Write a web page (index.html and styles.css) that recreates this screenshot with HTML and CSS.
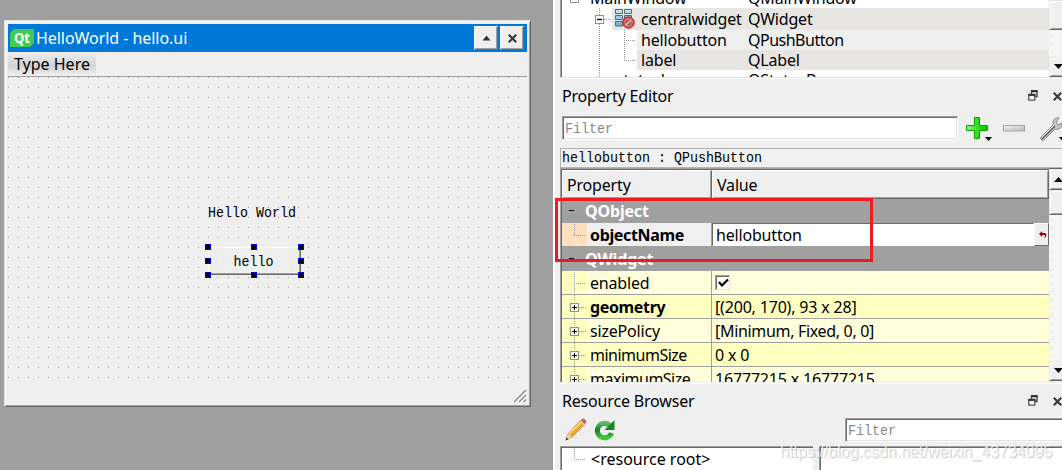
FILE: index.html
```
<!DOCTYPE html>
<html lang="en">
<head>
<meta charset="utf-8">
<title>Qt Designer</title>
<link rel="stylesheet" href="styles.css">
</head>
<body>
<svg width="0" height="0" class="defs">
  <defs>
    <symbol id="float" viewBox="0 0 10 11"><path d="M3.500 1v5.500H9V1z" fill="#efefef" stroke="#3c3c3c" stroke-width="1.300"/><path d="M3 1.200h6.500" stroke="#333" stroke-width="2.200"/><path d="M.8 4.500h6v5.700h-6z" fill="#f4f4f4" stroke="#555" stroke-width="1.300"/><path d="M.3 5h7" stroke="#333" stroke-width="1.800"/></symbol>
    <symbol id="cross" viewBox="0 0 9 9"><path d="M.8 .8l7.400 7.400M8.200 .8L.8 8.200" stroke="#3a3a3a" stroke-width="2.200"/></symbol>
    <linearGradient id="green" x2="1"><stop stop-color="#a0f08a"/><stop offset=".5" stop-color="#35df20"/><stop offset="1" stop-color="#06c800"/></linearGradient>
    <linearGradient id="metal" x2="1" y2="1"><stop stop-color="#f3f3f3"/><stop offset="1" stop-color="#b8b8b8"/></linearGradient>
    <linearGradient id="leaf" y2="1" x2="0"><stop stop-color="#5fbd62"/><stop offset=".45" stop-color="#168022"/><stop offset="1" stop-color="#3ccb37"/></linearGradient>
    <linearGradient id="cell" y2="1" x2="0"><stop stop-color="#c4e6f6"/><stop offset="1" stop-color="#6db0d8"/></linearGradient>
  </defs>
</svg>
<main class="designer">
  <section class="canvas">
    <div class="window">
      <header class="titlebar">
        <svg class="qt" width="24" height="18" viewBox="0 0 24 18"><path d="M4 0h20v14l-4 4H0V4z" fill="#41cd52"/><text x="4" y="14" class="qt-text" textLength="16" lengthAdjust="spacingAndGlyphs">Qt</text></svg>
        <span class="ui title-text">HelloWorld - hello.ui</span>
        <span class="tbtn"><svg width="9" height="6" viewBox="0 0 9 6"><path d="M4.500 .5L8.500 5.500h-8z" fill="#333"/></svg></span>
        <span class="tbtn"><svg width="9" height="9"><use href="#cross"/></svg></span>
      </header>
      <div class="menubar"><span class="menu ui">Type Here</span></div>
      <div class="form">
        <span class="hello-label mono"><span>Hello World</span></span>
        <div class="push mono"><span>hello</span>
          <i class="h l t"></i><i class="h c t"></i><i class="h r t"></i><i class="h l m"></i><i class="h r m"></i><i class="h l b"></i><i class="h c b"></i><i class="h r b"></i>
        </div>
      </div>
      <div class="status"><svg width="13" height="13" viewBox="0 0 13 13"><path d="M0 12L12 0M5 12l7-7M9.500 12l2.500-2.500" stroke="#909090" stroke-width="1.500"/><path d="M2 12.500L12.500 2M6.600 12.500l6-6" stroke="#fff" stroke-width=".8"/></svg></div>
    </div>
  </section>
  <section class="docks">
    <div class="tree">
      <div class="tree-rows ui">
        <div class="trow first"><span class="gut"><i class="exp"></i></span><span class="mw">MainWindow</span><span class="qc">QMainWindow</span></div>
        <div class="trow central"><svg class="branch" width="50" height="22"><path d="M37.500 0v22M42 11.500h8" class="dots"/><rect x="33.500" y="7.500" width="8" height="8" fill="#fff" stroke="#919191"/><path d="M35 11.500h5" stroke="#000" stroke-width="1.400"/></svg>
          <span class="fill alt"><svg class="layout" width="20" height="20" viewBox="0 0 20 20"><g fill="url(#cell)" stroke="#5a6a76"><path d="M.5 .5h7v4h-7zM9.500 .5h7v4h-7zM.5 6.500h7v4h-7zM9.500 6.500h7v4h-7zM.5 12.500h7v4.500h-7z"/></g><circle cx="13.500" cy="13.500" r="5.800" fill="#d9534c" stroke="#a82f2a"/><circle cx="13.500" cy="13.500" r="3.300" fill="#c8413b" stroke="#9a8886" stroke-width="1.500"/><path d="M11 16l5-5" stroke="#ddd" stroke-width="1.300"/></svg><span class="tn">centralwidget</span><span class="tc">QWidget</span></span></div>
        <div class="trow child"><svg class="branch" width="75" height="20"><path d="M37.500 0v20M62.500 0v20M64 10.500h10" class="dots"/></svg><span class="fill"><span class="tn">hellobutton</span><span class="tc tight">QPushButton</span></span></div>
        <div class="trow child"><svg class="branch" width="75" height="20"><path d="M37.500 0v20M62.500 0v10M62 10.500h12" class="dots"/></svg><span class="fill alt"><span class="tn">label</span><span class="tc">QLabel</span></span></div>
        <div class="trow child"><svg class="branch" width="50" height="20"><path d="M37.500 0v20" class="dots"/></svg><span class="fill last"><span class="tn">statusbar</span><span class="tc">QStatusBar</span></span></div>
      </div>
      <div class="scroll s1"><i class="thumb t1"></i><i class="grow"></i><i class="sbtn"><svg width="9" height="5"><path d="M0 0h9L4.500 5z"/></svg></i></div>
    </div>
    <div class="dock-title ui"><span>Property Editor</span><svg class="fl" width="10" height="11"><use href="#float"/></svg><svg width="9" height="9"><use href="#cross"/></svg></div>
    <div class="filter-row">
      <div class="input mono"><span>Filter</span></div>
      <svg class="plus" width="28" height="26" viewBox="0 0 28 26"><path d="M9.500 1.500h5v8h8v5h-8v8h-5v-8h-8v-5h8z" fill="url(#green)" stroke="#0a9d08"/><path d="M20 21h7l-3.500 4z"/></svg>
      <svg class="less" width="22" height="7"><rect x=".5" y=".5" width="21" height="5.500" fill="url(#metal)" stroke="#a5a5a5"/></svg>
      <svg class="wrench" width="24" height="26" viewBox="0 0 24 26"><path d="M2 21L14 9c-1-4 2-8 6-7l-3 4 2 3 4-2c0 5-3 7-7 6L5 24c-3 1-4-1-3-3z" fill="#c8c8c8" stroke="#777" stroke-width=".8"/><path d="M3 23L16 10" stroke="#555" stroke-width="1.500"/><path d="M3 21L15 9" stroke="#fff"/><path d="M20 21h7l-3.500 4z"/></svg>
    </div>
    <div class="object mono"><span>hellobutton : QPushButton</span></div>
    <div class="props">
      <div class="grid ui">
        <div class="head"><span class="hc h1">Property</span><span class="hc h2">Value</span></div>
        <div class="group g1"><i class="gm"></i><b>QObject</b></div>
        <div class="prow edit"><span class="ind"><svg width="26" height="23"><path d="M12.500 1v11M12 12.500h12" class="dots"/></svg></span><span class="name"><b>objectName</b></span><span class="editor">hellobutton</span><span class="reset"><svg width="8" height="8" viewBox="0 0 8 8"><path d="M0 3l3-3v2h2.500C8 2 8 6 5.500 7V6C6.500 5 6 4 5 4H3v2z" fill="#980000"/></svg></span></div>
        <div class="group g2"><i class="gm"></i><b>QWidget</b></div>
        <div class="prow light"><span class="ind"><svg width="26" height="23"><path d="M12.500 1v22M14 12.500h10" class="dots"/></svg></span><span class="name">enabled</span><span class="val"><i class="check"><svg width="11" height="10"><path d="M1 4l3 3.500L10 1.500" fill="none" stroke="#000" stroke-width="2.200"/></svg></i></span></div>
        <div class="prow"><span class="ind"><svg width="26" height="23"><path d="M12.500 0v23M17 12.500h8" class="dots"/><rect x="8.500" y="8.500" width="8" height="8" fill="#ffffe5" stroke="#919191"/><path d="M10 12.500h5M12.500 10v5" stroke="#000"/></svg></span><span class="name tight"><b>geometry</b></span><span class="val">[(200, 170), 93 x 28]</span></div>
        <div class="prow light"><span class="ind"><svg width="26" height="23"><path d="M12.500 0v23M17 12.500h8" class="dots"/><rect x="8.500" y="8.500" width="8" height="8" fill="#ffffe5" stroke="#919191"/><path d="M10 12.500h5M12.500 10v5" stroke="#000"/></svg></span><span class="name">sizePolicy</span><span class="val snug">[Minimum, Fixed, 0, 0]</span></div>
        <div class="prow"><span class="ind"><svg width="26" height="23"><path d="M12.500 0v23M17 12.500h8" class="dots"/><rect x="8.500" y="8.500" width="8" height="8" fill="#ffffe5" stroke="#919191"/><path d="M10 12.500h5M12.500 10v5" stroke="#000"/></svg></span><span class="name tight">minimumSize</span><span class="val">0 x 0</span></div>
        <div class="prow light"><span class="ind"><svg width="26" height="23"><path d="M12.500 0v23M17 12.500h8" class="dots"/><rect x="8.500" y="8.500" width="8" height="8" fill="#ffffe5" stroke="#919191"/><path d="M10 12.500h5M12.500 10v5" stroke="#000"/></svg></span><span class="name tight">maximumSize</span><span class="val">16777215 x 16777215</span></div>
      </div>
      <div class="scroll s2"><i class="sbtn up"><svg width="9" height="5"><path d="M0 5h9L4.500 0z"/></svg></i><i class="thumb t2"></i><i class="grow"></i><i class="sbtn"><svg width="9" height="5"><path d="M0 0h9L4.500 5z"/></svg></i></div>
    </div>
    <div class="dock-title second ui"><span>Resource Browser</span><svg class="fl" width="10" height="11"><use href="#float"/></svg><svg width="9" height="9"><use href="#cross"/></svg></div>
    <div class="tools">
      <svg width="24" height="24" viewBox="0 0 24 24"><path d="M2 22l2-6L17 2l4 4L8 19z" fill="#efaa32" stroke="#b66f16" stroke-width=".7"/><path d="M5 16L18 3" stroke="#ffd779" stroke-width="1.600"/><path d="M2 22l2-6 4 3z" fill="#eed9b3"/><path d="M1.500 22.500l1-3 2 1.500z" fill="#333"/><path d="M17 2l2-1.500q3 .5 3.500 3.500L21 6z" fill="#c9654a"/><path d="M16 3l4 4" stroke="#ccc" stroke-width="1.500"/></svg>
      <svg class="reload" width="22" height="22" viewBox="0 0 22 22"><path d="M16 6.500A7.300 7.300 0 1 0 17.500 14" fill="none" stroke="url(#leaf)" stroke-width="5"/><path d="M20.500 1v10H10.500z" fill="#188524"/></svg>
      <div class="input mono"><span>Filter</span></div>
    </div>
    <div class="resources">
      <div class="rbox ui"><svg width="25" height="24"><path d="M12.500 0v10M12 10.500h12" class="dots"/></svg><span class="rr">&lt;resource root&gt;</span></div>
      <div class="rbox right"></div>
    </div>
  </section>
  <div class="highlight"></div>
  <div class="watermark">https://blog.csdn.net/weixin_43734095</div>
</main>
</body>
</html>
```
FILE: styles.css
```
* { box-sizing: border-box; }
body { margin: 0; width: 1062px; height: 470px; overflow: hidden; background: #efefef; }
.defs { position: absolute; }
svg { display: block; flex: none; }
.designer { position: relative; display: flex; width: 1062px; height: 470px; overflow: hidden; }
.ui { font: 16px/20px "Noto Sans", "Open Sans", sans-serif; letter-spacing: -.18px; color: #000; white-space: nowrap; }
.tight { letter-spacing: -.5px; }
.snug { letter-spacing: -.32px; }
.mono { font: 13.33px/16px "Liberation Mono", monospace; color: #000; white-space: pre; }
.mono > span { display: inline-block; transform: scaleY(1.16); }
.dots { fill: none; stroke: #999; stroke-dasharray: 1 1; }

/* Form being edited */
.canvas { width: 553px; background: #a0a0a0; flex: none; }
.window { position: absolute; left: 4px; top: 20px; width: 527px; height: 387px; padding: 3px; background: #efefef; border: 1px solid; border-color: #e3e3e3 #696969 #696969 #e3e3e3; box-shadow: inset 1px 1px #fff, inset -1px -1px #a0a0a0; display: flex; flex-direction: column; }
.titlebar { height: 28px; background: #0078d7; display: flex; align-items: center; padding: 0 3px 0 2px; flex: none; }
.qt-text { font: bold 15px "Open Sans", sans-serif; fill: #fff; }
.title-text { color: #fff; margin-left: 2px; letter-spacing: -.05px; flex: 1; }
.tbtn { width: 24px; height: 24px; margin-left: 2px; background: #efefef; border: 1px solid; border-color: #fff #696969 #696969 #fff; box-shadow: inset -1px -1px #a0a0a0; display: flex; align-items: center; justify-content: center; }
.menubar { height: 25px; border-bottom: 1px solid #a0a0a0; flex: none; }
.menu { display: block; width: 88px; height: 23px; padding: 2px 0 0 6px; letter-spacing: 0; background: linear-gradient(#efefef, #d2d2d2 60%, #ededed); }
.form { height: 310px; background: conic-gradient(from 0deg at 1px 1px, transparent 75%, #a0a0a0 0) 0 0 / 10px 10px; padding: 129px 0 0 200px; flex: none; }
.hello-label { display: block; height: 16px; }
.push { position: relative; margin-top: 25px; width: 93px; height: 28px; background: #efefef; border: 1px solid; border-color: #fff #696969 #696969 #fff; box-shadow: inset -1px -1px #a0a0a0; text-align: center; padding: 7px 2px 0 0; }
.h { position: absolute; width: 6px; height: 6px; background: #000; border: 1px solid #0000e0; }
.h.l { left: -4px; } .h.c { left: 42px; } .h.r { right: -4px; }
.h.t { top: -4px; } .h.m { top: 10px; } .h.b { bottom: -4px; }
.status { flex: 1; display: flex; justify-content: flex-end; align-items: flex-end; }

/* Dock widgets */
.docks { flex: 1; min-width: 0; border-left: 2px solid #fff; padding-left: 5px; display: flex; flex-direction: column; }
.tree { height: 79px; display: flex; border-bottom: 1px solid #fff; box-shadow: inset 0 -1px #e3e3e3; flex: none; }
.tree-rows { height: 77px; width: 489px; flex: none; background: #fff; border-left: 1px solid #a0a0a0; box-shadow: inset 1px 0 #696969; overflow: hidden; }
.trow { display: flex; height: 20px; padding-left: 1px; }
.trow.first { height: 8px; align-items: flex-end; line-height: 19px; }
.gut { width: 28px; height: 8px; }
.exp { display: block; margin: -6px 0 0 8px; width: 9px; height: 9px; border: 1px solid #919191; }
.mw { width: 158px; }
.trow.central { height: 22px; }
.fill { flex: 1; display: flex; background: #efefef; }
.fill.alt { background: #e7e6e3; }
.fill.last { background: #fff; }
.layout { margin: 1px 0 0 3px; }
.tn { padding-left: 4px; }
.central .tn { width: 113px; padding-left: 6px; padding-top: 1px; }
.central .tc { padding-top: 1px; }
.child .tn { width: 111px; }
.child .last .tn { width: 136px; }
.scroll { width: 20px; flex: none; display: flex; flex-direction: column; background: repeating-conic-gradient(#fff 0 25%, #ededed 0 50%) 0 0 / 2px 2px; }
.s1 { height: 77px; }
.s2 { height: 213px; border-top: 1px solid #696969; }
.thumb, .sbtn { display: block; flex: none; background: #efefef; border: 1px solid; border-color: #e3e3e3 #696969 #696969 #e3e3e3; box-shadow: inset 1px 1px #fff, inset -1px -1px #a0a0a0; }
.t1 { height: 30px; } .t2 { height: 25px; }
.grow { flex: 1; }
.sbtn { height: 20px; padding: 6px 0 0 4px; }
.sbtn.up { height: 21px; padding-top: 7px; }
.dock-title { height: 37px; display: flex; align-items: center; padding: 0 0 3px 2px; flex: none; }
.dock-title > span { width: 466px; flex: none; }
.dock-title .fl { margin-right: 15px; margin-top: -2px; }
.filter-row { height: 24px; padding-left: 2px; display: flex; flex: none; }
.input { width: 396px; height: 24px; background: #fff; border: 1px solid; border-color: #a0a0a0 #fff #fff #a0a0a0; box-shadow: inset 1px 1px #696969, inset -1px -1px #e3e3e3; color: #888; padding: 5px 0 0 2px; flex: none; }
.plus { margin-left: 7px; } .less { margin: 9px 0 0 10px; } .wrench { margin-left: 14px; }
.object { height: 20px; margin-top: 8px; border: 1px solid #b4b4b4; background: #f0f0f0; padding: 2px 0 0 1px; width: 510px; flex: none; }
.props { display: flex; height: 216px; border-bottom: 1px solid #fff; flex: none; }
.grid { width: 489px; height: 214px; flex: none; border: solid #a0a0a0; border-width: 1px 0 0 1px; box-shadow: inset 1px 1px #696969; overflow: hidden; padding: 1px 0 0 1px; }
.head { display: flex; height: 29px; }
.hc { border: 1px solid; border-color: #fff #696969 #696969 #fff; box-shadow: inset -1px -1px #a0a0a0; background: #efefef; padding: 4px 0 0 4px; }
.h1 { width: 150px; } .h2 { flex: 1; }
.group { height: 24px; background: #a0a0a0; color: #fff; display: flex; padding: 2px 0 0 7px; }
.g2 { height: 25px; padding-top: 3px; }
.gm { width: 5px; height: 1px; background: #000; margin-top: 9px; margin-right: 11px; }
.prow { height: 24px; display: flex; background: #ffffbf; border-bottom: 1px solid #a0a0a0; }
.prow.light { background: #ffffdc; }
.ind { width: 25px; background: #ffffbf; overflow: hidden; }
.name { width: 125px; border-right: 1px solid #a0a0a0; padding: 2px 0 0 3px; overflow: hidden; }
.name b { letter-spacing: -.35px; }
.val { padding: 2px 0 0 3px; }
.edit { height: 23px; border: 0; background: #f0f0f0; }
.edit .ind { background: #ffdfbf; }
.editor { flex: 1; background: #fff; border: 1px solid; border-color: #696969 #fff #fff #696969; padding: 1px 0 0 3px; }
.reset { width: 15px; background: #efefef; border: 1px solid; border-color: #fff #696969 #696969 #fff; padding: 7px 0 0 4px; }
.check { display: block; width: 15px; height: 15px; margin-top: 2px; background: #fff; border: 1px solid; border-color: #a0a0a0 #e3e3e3 #e3e3e3 #a0a0a0; box-shadow: inset 1px 1px #696969; padding: 2px; }
.second { height: 34px; padding-bottom: 0; }
.tools { height: 28px; display: flex; padding-left: 4px; flex: none; }
.reload { margin: 1px 0 0 6px; }
.tools .input { margin-left: 229px; width: 230px; }
.resources { display: flex; gap: 6px; flex: 1; }
.rbox { width: 253px; flex: none; background: #fff; border: solid #a0a0a0; border-width: 1px 0 0 1px; box-shadow: inset 1px 1px #696969; display: flex; padding: 2px 0 0 1px; }
.rr { padding-left: 4px; letter-spacing: 0; }
.highlight { position: absolute; left: 555px; top: 198px; width: 318px; height: 64px; border: 3px solid #ed1c24; }
.watermark { position: absolute; left: 780px; top: 442px; font: 16px/20px "Liberation Sans", sans-serif; color: rgba(255,255,255,.75); text-shadow: 1px 1px 1px rgba(120,120,120,.45); white-space: nowrap; }
```
